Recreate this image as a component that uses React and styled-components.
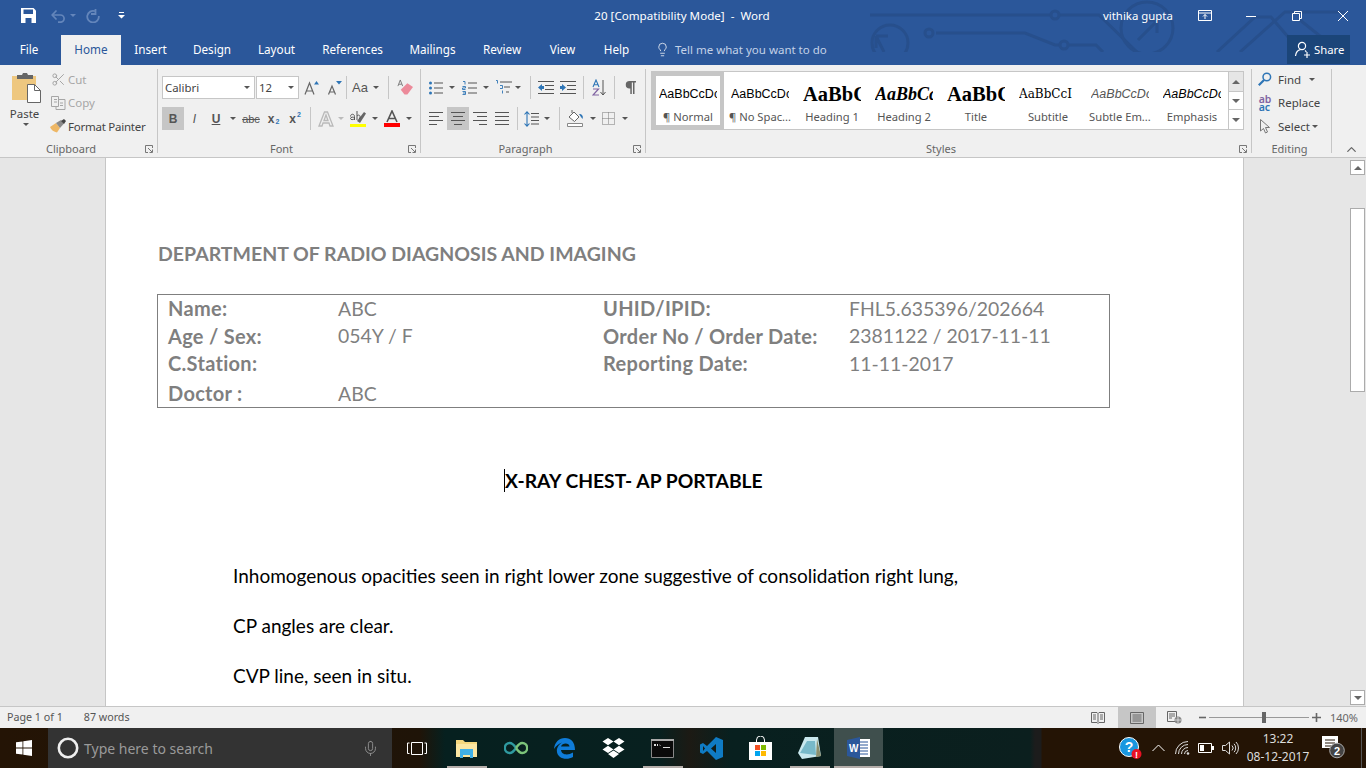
import React from 'react';
import styled, { createGlobalStyle } from 'styled-components';
import { Scissors, Lightbulb, ChevronUp, Mic } from 'lucide-react';

const UI = '"Noto Sans", "Open Sans", sans-serif';
const DOC = 'Lato, "Liberation Sans", sans-serif';
const BLUE = '#2b579a';
const LINE = '#c6c6c6';
const ACCENT = '#2e75b6';

const Global = createGlobalStyle`
  html, body { margin: 0; padding: 0; background: #fff; overflow: hidden; }
  * { box-sizing: border-box; }
`;

const Screen = styled.div`
  width: 1366px;
  height: 768px;
  display: flex;
  flex-direction: column;
  overflow: hidden;
  font-family: ${UI};
`;

/* title bar */
const Head = styled.header`
  position: relative;
  height: 65px;
  flex: none;
  background: ${BLUE};
  color: #fff;
`;
const Circuit = styled.svg`
  position: absolute;
  left: 860px;
  top: 0;
`;
const TitleRow = styled.div`
  position: relative;
  height: 35px;
  display: flex;
  align-items: center;
  padding-bottom: 4px;
`;
const Qat = styled.div`
  display: flex;
  align-items: center;
  width: 472px;
  padding-left: 21px;
`;
const QatBtn = styled.span`
  display: flex;
  align-items: center;
  justify-content: center;
  width: ${(p) => p.$w}px;
  margin-left: ${(p) => p.$ml || 0}px;
`;
const DocName = styled.div`
  width: 420px;
  text-align: center;
  font-size: 11.6px;
  white-space: pre;
`;
const UserName = styled.div`
  margin-left: 211px;
  width: 72px;
  font-size: 11.4px;
  white-space: nowrap;
`;
const WinBtn = styled.span`
  display: flex;
  justify-content: center;
  width: ${(p) => p.$w}px;
  margin-left: ${(p) => p.$ml || 0}px;
`;

const TabRow = styled.nav`
  position: relative;
  height: 30px;
  display: flex;
  align-items: flex-start;
`;
const Tab = styled.div`
  width: ${(p) => p.$w}px;
  height: 30px;
  padding-right: ${(p) => p.$pr || 0}px;
  line-height: 28px;
  text-align: center;
  font-size: 11.7px;
  color: ${(p) => (p.$on ? BLUE : '#fff')};
  background: ${(p) => (p.$on ? '#f0f0f0' : 'transparent')};
`;
const TellMe = styled.div`
  display: flex;
  align-items: center;
  gap: 5px;
  margin-left: 12px;
  height: 28px;
  font-size: 11.5px;
  color: #c3d2e8;
`;
const Share = styled.div`
  margin-left: auto;
  margin-right: 16px;
  width: 63px;
  height: 29px;
  display: flex;
  align-items: center;
  gap: 3px;
  padding-left: 7px;
  background: #1b4579;
  font-size: 11.3px;
`;

/* ribbon */
const Ribbon = styled.section`
  height: 93px;
  flex: none;
  display: flex;
  align-items: flex-start;
  padding-top: 4px;
  background: #f0f0f0;
  border-bottom: 1px solid ${LINE};
  color: #444;
  font-size: 11.5px;
`;
const Group = styled.div`
  width: ${(p) => p.$w}px;
  height: 84px;
  flex: none;
  display: flex;
  flex-direction: column;
  border-right: 1px solid ${LINE};
`;
const GroupBody = styled.div`
  flex: 1;
  min-height: 0;
  display: ${(p) => (p.$flex ? 'flex' : 'block')};
  padding: ${(p) => p.$pad || '0'};
`;
const GroupLabel = styled.div`
  display: flex;
  align-items: center;
  height: 16px;
  margin-bottom: -4px;
  padding-right: 4px;
  font-size: 11px;
  color: #666;
  line-height: 16px;
  & > span { flex: 1; text-align: center; }
  & > svg { margin-left: 3px; }
`;
const PasteCol = styled.div`
  width: 48px;
  flex: none;
  display: flex;
  flex-direction: column;
  align-items: center;
  padding: 4px 0 0 4px;
`;
const PasteName = styled.div`
  margin: 2px 3px 0 0;
  line-height: 18px;
`;
const SmallCol = styled.div`
  display: flex;
  flex-direction: column;
  gap: 3.5px;
`;
const SmallRow = styled.div`
  height: 20px;
  display: flex;
  align-items: center;
  white-space: nowrap;
  letter-spacing: ${(p) => (p.$tight ? '-0.25px' : 'normal')};
  color: ${(p) => (p.$off ? '#a6a6a6' : '#444')};
`;
const SmallIcon = styled.span`
  width: ${(p) => p.$w || 20}px;
  flex: none;
  display: flex;
  justify-content: center;
`;
const Row = styled.div`
  display: flex;
  align-items: center;
  height: 23px;
  margin-top: ${(p) => p.$mt || 0}px;
`;
const Tool = styled.span`
  width: ${(p) => p.$w}px;
  height: 23px;
  flex: none;
  margin-left: ${(p) => p.$ml || 0}px;
  display: flex;
  align-items: center;
  justify-content: center;
  background: ${(p) => (p.$on ? LINE : 'transparent')};
  color: #555;
`;
const Caret = styled.i`
  width: ${(p) => p.$w || 10}px;
  margin-left: ${(p) => p.$ml || 0}px;
  flex: none;
  display: flex;
  justify-content: center;
  &::after {
    content: '';
    border-left: 3px solid transparent;
    border-right: 3px solid transparent;
    border-top: 3px solid ${(p) => p.$c || '#555'};
  }
`;
const Sep = styled.span`
  width: 1px;
  height: 23px;
  flex: none;
  margin-left: ${(p) => p.$ml || 0}px;
  background: ${LINE};
`;
const Combo = styled.div`
  width: ${(p) => p.$w}px;
  height: 23px;
  flex: none;
  margin-right: ${(p) => p.$mr || 0}px;
  display: flex;
  align-items: center;
  justify-content: space-between;
  padding: 0 4px 0 2px;
  background: #fff;
  border: 1px solid ${LINE};
  font-size: 11.4px;
  color: #444;
`;

const Gallery = styled.div`
  width: 593px;
  height: 59px;
  margin: 2px 0 0 5px;
  display: flex;
  background: #fff;
  border: 1px solid ${LINE};
`;
const StyleItem = styled.div`
  width: 72px;
  height: 57px;
  flex: none;
  display: flex;
  flex-direction: column;
  align-items: center;
  border: 4px solid ${(p) => (p.$on ? LINE : 'transparent')};
  overflow: hidden;
`;
const Preview = styled.div`
  width: 58px;
  height: 33px;
  line-height: 36px;
  overflow: hidden;
  white-space: nowrap;
  text-align: left;
  color: ${(p) => p.$c || '#000'};
  font-family: ${(p) => p.$f || '"Liberation Sans", sans-serif'};
  font-size: ${(p) => p.$s || 12.5}px;
  font-weight: ${(p) => (p.$b ? 700 : 400)};
  font-style: ${(p) => (p.$i ? 'italic' : 'normal')};
`;
const StyleName = styled.div`
  line-height: 16px;
  margin-top: 1px;
  font-size: 11.2px;
  color: #555;
  white-space: nowrap;
`;
const GalleryScroll = styled.div`
  width: 15px;
  margin-left: auto;
  display: flex;
  flex-direction: column;
  border-left: 1px solid ${LINE};
`;
const GalleryBtn = styled.div`
  height: ${(p) => p.$h}px;
  display: flex;
  align-items: center;
  justify-content: center;
  background: ${(p) => (p.$off ? '#e6e6e6' : '#fff')};
  border-bottom: ${(p) => (p.$last ? 'none' : `1px solid ${LINE}`)};
`;
const Collapse = styled.div`
  flex: 1;
  height: 88px;
  display: flex;
  align-items: flex-end;
  padding-left: 12px;
  color: #666;
`;

/* document */
const DocArea = styled.main`
  flex: 1;
  min-height: 0;
  display: flex;
  background: #e6e6e6;
  border-bottom: 1px solid ${LINE};
`;
const Page = styled.article`
  width: 1139px;
  margin-left: 105px;
  padding: 84px 0 0 51px;
  background: #fff;
  border-left: 1px solid ${LINE};
  border-right: 1px solid ${LINE};
  overflow: hidden;
  font-family: ${DOC};
`;
const DeptTitle = styled.h1`
  margin: 0 0 0 1px;
  font-size: 19.5px;
  line-height: 24px;
  font-weight: 700;
  color: #7f7f7f;
`;
const InfoBox = styled.div`
  width: 953px;
  height: 114px;
  margin-top: 28px;
  padding-left: 10px;
  display: grid;
  grid-template-columns: 170px 265px 246px 1fr;
  grid-template-rows: 26px 29px 26px 31px;
  align-items: center;
  border: 1px solid #7f7f7f;
  color: #7f7f7f;
`;
const InfoCell = styled.div`
  font-weight: ${(p) => (p.$b ? 700 : 400)};
  font-size: ${(p) => (p.$b ? 20 : 19.4)}px;
  letter-spacing: ${(p) => (p.$b ? '0.3px' : 'normal')};
  white-space: nowrap;
  padding-top: ${(p) => (p.$low ? 3 : 0)}px;
`;
const ReportTitle = styled.h2`
  margin: 61px 0 0 347px;
  font-size: 19.3px;
  line-height: 24px;
  font-weight: 700;
  color: #000;
  white-space: nowrap;
`;
const TextCursor = styled.span`
  border-left: 1px solid #000;
`;
const Finding = styled.p`
  margin: ${(p) => p.$mt}px 0 0 76px;
  font-size: 19px;
  line-height: 24px;
  color: #000;
  white-space: nowrap;
`;
const ScrollBar = styled.div`
  width: 16px;
  margin-left: auto;
  padding: 2px 1px 1px 0;
  display: flex;
  flex-direction: column;
`;
const ScrollBtn = styled.div`
  height: 15px;
  flex: none;
  display: flex;
  align-items: center;
  justify-content: center;
  background: #fff;
  border: 1px solid #ababab;
`;
const ScrollThumb = styled.div`
  height: 184px;
  margin: 33px 0 auto;
  background: #fff;
  border: 1px solid #ababab;
`;
const Tri = styled.i`
  border-left: 4px solid transparent;
  border-right: 4px solid transparent;
  ${(p) => (p.$up ? 'border-bottom' : 'border-top')}: 4px solid #666;
`;

/* status bar */
const Status = styled.footer`
  height: 21px;
  flex: none;
  display: flex;
  align-items: center;
  padding: 0 0 2px 7px;
  background: #f0f0f0;
  color: #555;
  font-size: 10.7px;
`;
const Words = styled.span`
  margin-left: 21px;
`;
const StatusRight = styled.div`
  margin-left: auto;
  display: flex;
  align-items: center;
  height: 21px;
  margin-bottom: -2px;
  padding-right: 8px;
`;
const ViewBtn = styled.span`
  width: ${(p) => p.$w}px;
  height: 21px;
  margin-right: ${(p) => p.$mr || 0}px;
  display: flex;
  align-items: center;
  justify-content: center;
  background: ${(p) => (p.$on ? LINE : 'transparent')};
`;
const ZoomTrack = styled.div`
  position: relative;
  width: 100px;
  height: 1px;
  margin: 0 3px;
  background: #999;
`;
const ZoomThumb = styled.span`
  position: absolute;
  left: 53px;
  top: -5px;
  width: 4px;
  height: 11px;
  background: #666;
`;
const ZoomPct = styled.span`
  margin-left: 9px;
  font-size: 11px;
  color: #666;
`;

/* taskbar */
const Taskbar = styled.div`
  height: 40px;
  flex: none;
  display: flex;
  align-items: center;
  background: linear-gradient(90deg, #241405 0, #1f1408 420px, #06201f 445px, #08201f 660px, #1c1a14 690px, #08201f 730px, #0b1f1e 1030px, #1c1c1c 1035px, #1c1c1c 1041px, #241405 1042px);
`;
const StartBtn = styled.div`
  width: 48px;
  height: 40px;
  flex: none;
  display: flex;
  align-items: center;
  justify-content: center;
`;
const SearchBox = styled.div`
  width: 344px;
  height: 40px;
  flex: none;
  display: flex;
  align-items: center;
  padding-left: 9px;
  background: #333;
  color: #9a9a9a;
  font-size: 14px;
`;
const SearchHint = styled.span`
  margin-left: 5px;
`;
const MicSlot = styled.span`
  margin-left: auto;
  margin-right: 13px;
  display: flex;
  color: #9a9a9a;
`;
const Apps = styled.div`
  display: flex;
  margin-left: -1px;
`;
const AppBtn = styled.div`
  width: ${(p) => p.$w || 49}px;
  height: 40px;
  display: flex;
  align-items: center;
  justify-content: center;
  background-color: ${(p) => (p.$on ? '#3f4f4d' : 'transparent')};
  background-image: ${(p) => (p.$run ? 'linear-gradient(#b5aeaa, #b5aeaa)' : 'none')};
  background-repeat: no-repeat;
  background-position: center bottom;
  background-size: ${(p) => (p.$on ? '100%' : '40px')} 2px;
`;
const Tray = styled.div`
  margin-left: auto;
  display: flex;
  align-items: center;
  height: 40px;
`;
const TraySlot = styled.span`
  width: ${(p) => p.$w}px;
  display: flex;
  justify-content: center;
`;
const Clock = styled.div`
  width: 72px;
  text-align: center;
  color: #ddd;
  font-size: 12px;
  line-height: 18px;
`;
const Notify = styled.span`
  width: 40px;
  display: flex;
  justify-content: center;
`;
const DesktopEdge = styled.span`
  width: 1px;
  height: 40px;
  margin: 0 4px 0 7px;
  background: #555;
`;

/* drawings */
const Save = () => (
  <svg width="15" height="15" viewBox="0 0 15 15">
    <path d="M0 0h12.5L15 2.5V15H0z" fill="#fff" />
    <path d="M2.5 1.5H12V6H2.5z" fill={BLUE} />
    <path d="M4.5 10h6v5h-6z" fill={BLUE} />
  </svg>
);
const Undo = () => (
  <svg width="14" height="14" viewBox="0 0 14 14" fill="none" stroke="#6486bb" strokeWidth="1.7">
    <path d="M1.5 6h8a3.6 3.6 0 0 1 0 7.2H7" />
    <path d="M5.5 1.5 1.2 6l4.3 4.5" />
  </svg>
);
const Redo = () => (
  <svg width="14" height="14" viewBox="0 0 14 14" fill="none" stroke="#6486bb" strokeWidth="1.8">
    <path d="M9 2.2A5.8 5.8 0 1 0 12.8 7" />
    <path d="M9.5 0v5H5" />
  </svg>
);
const Customize = () => (
  <svg width="7" height="7" viewBox="0 0 7 7" fill="#fff">
    <path d="M1 0h5v1H1zM0 3h7L3.5 6.5z" />
  </svg>
);
const RibbonDisplay = () => (
  <svg width="14" height="11" viewBox="0 0 14 11" fill="none" stroke="#fff">
    <path d="M.5.5h13v10H.5zM.5 3h13" />
    <path d="M7 9V4.5M5 6.5l2-2 2 2" />
  </svg>
);
const Minimize = () => (
  <svg width="10" height="10" viewBox="0 0 10 10" stroke="#fff"><path d="M0 5.5h10" /></svg>
);
const Restore = () => (
  <svg width="10" height="10" viewBox="0 0 10 10" fill="none" stroke="#fff">
    <path d="M.5 2.5h7v7h-7zM2.5 2.5v-2h7v7h-2" />
  </svg>
);
const CloseX = () => (
  <svg width="10" height="10" viewBox="0 0 10 10" stroke="#fff"><path d="m0 0 10 10M10 0 0 10" /></svg>
);
const UserPlus = () => (
  <svg width="17" height="17" viewBox="0 0 17 17" fill="none" stroke="#fff" strokeWidth="1.2">
    <circle cx="8" cy="5" r="3.6" />
    <path d="M1.5 15c.5-3.8 2.5-6 5-6.3M11 9.5c.6.4 1 .9 1.3 1.5M10 14h6M13 11v6" />
  </svg>
);
const Launcher = () => (
  <svg width="8" height="8" viewBox="0 0 8 8" fill="none" stroke="#777">
    <path d="M7.5 3V.5H.5v7H3" />
    <path d="m3 3 4 4M7.5 4.5v3h-3" />
  </svg>
);
const PasteIcon = () => (
  <svg width="29" height="30" viewBox="0 0 29 30">
    <path d="M0 3h24v24H0z" fill="#eec77f" />
    <path d="M5 2h5l1-2h4l1 2h5v4H5z" fill="#666" />
    <path d="M15.5 11.5h7l6 6v12h-13z" fill="#fff" stroke="#666" />
    <path d="M22.5 11.5v6h6" fill="none" stroke="#666" />
  </svg>
);
const CopyIcon = () => (
  <svg width="15" height="14" viewBox="0 0 15 14" fill="none" stroke="#a6a6a6">
    <path d="M.5.5h7v10h-7zM7.5 3.5H14v10H5v-3M3 3.5h3M3 6h3M9 7h3M9 9.5h3" />
  </svg>
);
const PainterIcon = () => (
  <svg width="16" height="14" viewBox="0 0 16 14">
    <path d="M0 8 6 4l4 5-3 4.5C4 13 1 11 0 8z" fill="#eeb765" />
    <path d="m6 4 5-3 3 3.5L10 9z" fill="#8a8a8a" />
    <path d="m11 2 3-2 2 2-2 3z" fill="#444" />
  </svg>
);
const Grow = ({ up }) => (
  <svg width="15" height="14" viewBox="0 0 15 14" fill="none">
    <path d={up ? 'M1 13.5 5.5 2 10 13.5M2.5 10h6' : 'M1.5 13.5 5 5l3.5 8.5M2.8 11h4.5'} stroke="#666" strokeWidth="1.2" />
    <path d={up ? 'M10 3.5 12.5 0 15 3.5z' : 'M9 0h6l-3 3.5z'} fill={ACCENT} />
  </svg>
);
const Eraser = () => (
  <svg width="17" height="17" viewBox="0 0 17 17">
    <path d="M4 11 11 4l6 4-6 8H8z" fill="#ec8a9a" />
    <path d="M1 7 3.5.5 6 7M2 5h3" fill="none" stroke="#777" />
  </svg>
);
const BoldMark = styled.span`
  font-family: "Liberation Sans", sans-serif;
  font-weight: ${(p) => (p.$b ? 700 : 400)};
  font-style: ${(p) => (p.$i ? 'italic' : 'normal')};
  text-decoration: ${(p) => p.$d || 'none'};
  font-size: ${(p) => p.$s || 12}px;
  color: #555;
`;
const Script = styled.sub`
  font-size: 7px;
  color: ${ACCENT};
  vertical-align: ${(p) => (p.$up ? '6px' : '-1px')};
  margin-left: 1px;
`;
const TextEffect = () => (
  <svg width="16" height="16" viewBox="0 0 16 16" fill="#f0f0f0" stroke="#b9b9b9" strokeWidth="1.3">
    <path d="M1 15 6.5 1h3L15 15h-3l-1-3H5l-1 3zM6 9.5h4L8 4z" />
  </svg>
);
const Highlight = () => (
  <svg width="16" height="17" viewBox="0 0 16 17">
    <path d="M0 14h16v3H0z" fill="#ff0" />
    <path d="m7 11 7-9 2 1.5L10 13z" fill="#666" />
    <path d="M.5 6.5c0-3 4-3 4 0V10M4.5 8c-1-1.5-4-1-4 .5 0 1.5 3 1.5 4 0M7 1v9M7 6c2-2 4-.5 2.5 3" fill="none" stroke="#555" />
  </svg>
);
const FontColor = () => (
  <svg width="16" height="17" viewBox="0 0 16 17">
    <path d="M0 13h16v4H0z" fill="#f00" />
    <path d="M3 12 8 1l5 11M4.8 8.5h6.4" fill="none" stroke="#555" strokeWidth="1.6" />
  </svg>
);
const Bullets = () => (
  <svg width="14" height="14" viewBox="0 0 14 14">
    <path d="M5 2h9M5 7h9M5 12h9" stroke="#555" />
    <g fill={ACCENT}><circle cx="1.5" cy="2" r="1.5" /><circle cx="1.5" cy="7" r="1.5" /><circle cx="1.5" cy="12" r="1.5" /></g>
  </svg>
);
const Numbers = () => (
  <svg width="15" height="14" viewBox="0 0 15 14">
    <path d="M6 2h9M6 7h9M6 12h9" stroke="#555" />
    <path d="M1 .5h2v3M.5 5.5h3V7h-3v1.5h3M.5 10.5h3v3h-3M1 12h2.5" fill="none" stroke={ACCENT} strokeWidth=".9" />
  </svg>
);
const Multi = () => (
  <svg width="17" height="15" viewBox="0 0 17 15">
    <path d="M5 2h12M9 7h6M11 12h3" stroke="#555" />
    <path d="M1 .5h1.5v3M5 5.5h2.5v3H5M7.5 10.5v3" fill="none" stroke={ACCENT} strokeWidth=".9" />
  </svg>
);
const Indent = ({ out }) => (
  <svg width="16" height="13" viewBox="0 0 16 13">
    <path d="M0 .5h16M7 4.5h9M7 8.5h9M0 12.5h16" stroke="#555" />
    <path d={out ? 'M0 6.5 4 3v2h2v3H4v2z' : 'M6 6.5 2 3v2H0v3h2v2z'} fill={ACCENT} />
  </svg>
);
const SortIcon = () => (
  <svg width="15" height="17" viewBox="0 0 15 17" fill="none">
    <path d="M1 8 4 1l3 7M2 5.7h4" stroke={ACCENT} strokeWidth="1.1" />
    <path d="M1 10h5.5L1 16h6" stroke="#8064a2" strokeWidth="1.2" />
    <path d="M11 1v15M8.5 13l2.5 3 2.5-3" stroke="#555" />
  </svg>
);
const Pilcrow = () => (
  <svg width="11" height="13" viewBox="0 0 11 13" fill="#666">
    <path d="M4.5 0H11v1.5H9.5V13H8V1.5H6.8V13H5.3V7.5h-.8a3.75 3.75 0 0 1 0-7.5z" />
  </svg>
);
const Align = ({ kind }) => {
  const rows = {
    left: 'M0 .5h14M0 4.5h10M0 8.5h14M0 12.5h8',
    center: 'M0 .5h14M2 4.5h10M0 8.5h14M3 12.5h8',
    right: 'M0 .5h14M4 4.5h10M0 8.5h14M6 12.5h8',
    full: 'M0 .5h14M0 4.5h14M0 8.5h14M0 12.5h14',
  };
  return <svg width="14" height="13" viewBox="0 0 14 13"><path d={rows[kind]} stroke="#555" /></svg>;
};
const Spacing = () => (
  <svg width="15" height="16" viewBox="0 0 15 16">
    <path d="M7 2.5h8M7 6h8M7 9.5h8M7 13h8" stroke="#555" />
    <path d="M3 1v14M.5 3.5 3 .8l2.5 2.7M.5 12.5 3 15.2l2.5-2.7" fill="none" stroke={ACCENT} strokeWidth="1.1" />
  </svg>
);
const Shading = () => (
  <svg width="17" height="17" viewBox="0 0 17 17">
    <path d="M.5 13.5h15v3H.5z" fill="#fff" stroke="#888" />
    <path d="M2 7 7 2l5 5-4.5 4.5z" fill="#fff" stroke="#666" />
    <path d="M12 4c3 0 4.5 2 3.5 5L14 7z" fill={ACCENT} />
    <path d="M5 0v3" stroke="#666" />
  </svg>
);
const Borders = () => (
  <svg width="13" height="13" viewBox="0 0 13 13" fill="none" stroke="#777" strokeDasharray="1 1">
    <path d="M.5.5h12v12H.5zM6.5.5v12M.5 6.5h12" />
  </svg>
);
const FindIcon = () => (
  <svg width="14" height="14" viewBox="0 0 14 14" fill="none" stroke={ACCENT}>
    <circle cx="8.8" cy="5" r="3.8" strokeWidth="1.5" />
    <path d="M6 8 .8 13.2" strokeWidth="2.2" />
  </svg>
);
const ReplaceGlyph = styled.span`
  display: flex;
  flex-direction: column;
  font-size: 10.5px;
  font-weight: 600;
`;
const ReplaceTop = styled.span`
  display: block;
  height: 8px;
  line-height: 8px;
  color: #8064a2;
`;
const ReplaceBottom = styled.span`
  display: block;
  height: 8px;
  line-height: 8px;
  color: ${ACCENT};
`;
const PointerIcon = () => (
  <svg width="10" height="15" viewBox="0 0 10 15" fill="#f0f0f0" stroke="#777">
    <path d="M.5.5V12l3-2.5 2 4.5 2-1-2-4.5h4z" />
  </svg>
);
const ReadIcon = () => (
  <svg width="14" height="12" viewBox="0 0 14 12" fill="none" stroke="#666">
    <path d="M.5.5H6l1 1 1-1h5.5v10H8l-1 1-1-1H.5zM7 1.5v9M2 3h3M2 5h3M2 7h3M9 3h3M9 5h3M9 7h3" />
  </svg>
);
const PrintIcon = () => (
  <svg width="14" height="12" viewBox="0 0 14 12" fill="none" stroke="#666">
    <path d="M.5.5h13v11H.5zM2.5 3h9M2.5 5h9M2.5 7h9M2.5 9h9" />
  </svg>
);
const WebIcon = () => (
  <svg width="15" height="13" viewBox="0 0 15 13">
    <path d="M.5.5h9v10h-9zM2 3h6M2 5h6M2 7h3" fill="none" stroke="#666" />
    <circle cx="11" cy="9" r="3.5" fill="#888" />
    <path d="M8 9h6M11 6v6" stroke="#f0f0f0" strokeWidth=".7" />
  </svg>
);
const Plus = () => <svg width="9" height="9" viewBox="0 0 9 9"><path d="M0 4.5h9M4.5 0v9" stroke="#666" strokeWidth="1.6" /></svg>;
const Minus = () => <svg width="7" height="9" viewBox="0 0 7 9"><path d="M0 4.5h7" stroke="#666" strokeWidth="1.6" /></svg>;

const StartLogo = () => (
  <svg width="16" height="16" viewBox="0 0 16 16" fill="#fff">
    <path d="M0 2.3 6.5 1.4v6.2H0zM7.3 1.3 16 0v7.6H7.3zM0 8.4h6.5v6.2L0 13.7zM7.3 8.4H16V16l-8.7-1.3z" />
  </svg>
);
const Cortana = () => (
  <svg width="22" height="22" viewBox="0 0 22 22" fill="none"><circle cx="11" cy="11" r="9.2" stroke="#eee" strokeWidth="2.6" /></svg>
);
const TaskView = () => (
  <svg width="20" height="13" viewBox="0 0 20 13" fill="none" stroke="#fff">
    <path d="M4.5.5h11v12h-11zM2.500 1H.5v10.500h2M17.500 1h2v10.500h-2" />
  </svg>
);
const Explorer = () => (
  <svg width="22" height="19" viewBox="0 0 22 19">
    <path d="M0 1h7l2 2h12v15H0z" fill="#f5d77e" />
    <path d="M0 5h21v13H0z" fill="#fbe6a2" />
    <path d="M4 10h13v9h-3v-3H7v3H4z" fill="#3fb0e8" />
  </svg>
);
const Arduino = () => (
  <svg width="24" height="14" viewBox="0 0 24 14" fill="none" strokeWidth="2.4">
    <path d="M12 7C9 2.5 7.500 2 5.800 2a5 5 0 0 0 0 10c1.700 0 3.200-.5 6.200-5" stroke="#2f9aa0" />
    <path d="M12 7c3-4.500 4.500-5 6.200-5a5 5 0 0 1 0 10c-1.700 0-3.200-.5-6.200-5" stroke="#7cc47a" />
  </svg>
);
const Edge = () => (
  <svg width="21" height="21" viewBox="0 0 21 21">
    <path d="M0 11C.5 4.500 5 0 11 0c6 0 10 4 10 12H7c.3 4.500 6.500 6 12 2.500v4.500C12 23 1.500 20 3 11c.8-3 2.500-5 5-6.500C5 5.500 2 8 0 11zm7-2.500h8.500C15.500 4.500 8 4.500 7 8.500z" fill="#0f7cd8" />
  </svg>
);
const Dropbox = () => (
  <svg width="23" height="21" viewBox="0 0 23 21" fill="#fff">
    <path d="m6 0 5.500 3.600L6 7.200.5 3.600zM17 0l5.500 3.600L17 7.200l-5.500-3.600zM6 7.800l5.500 3.600L6 15 .5 11.400zM17 7.800l5.500 3.600L17 15l-5.500-3.600zM6 16l5.500-3.500L17 16l-5.500 4z" />
  </svg>
);
const Cmd = () => (
  <svg width="23" height="19" viewBox="0 0 23 19">
    <path d="M.5.5h22v18H.5z" fill="#0a0a0a" stroke="#888" />
    <path d="M0 0h23v2H0z" fill="#aaa" />
    <path d="M3 5h2v2H3zM6 5h1v2H6zM8 5l2 2H9zM12 8h7v1h-7z" fill="#ddd" />
  </svg>
);
const VsCode = () => (
  <svg width="23" height="23" viewBox="0 0 23 23">
    <path d="M16 0l7 3v17l-7 3-9-9-4 3-3-1.500v-8L3 6l4 3zM16 7l-5 4.500 5 4.500zM3 9v5l2-2.500z" fill="#0f7bc4" />
  </svg>
);
const Store = () => (
  <svg width="23" height="24" viewBox="0 0 23 24">
    <path d="M7.500 6V4a4 4 0 0 1 8 0v2" fill="none" stroke="#fff" />
    <path d="M0 6h23v18H0z" fill="#fff" />
    <path d="M6 9h5v5H6z" fill="#f25022" /><path d="M12 9h5v5h-5z" fill="#7fba00" />
    <path d="M6 15h5v5H6z" fill="#00a4ef" /><path d="M12 15h5v5h-5z" fill="#ffb900" />
  </svg>
);
const Notepad = () => (
  <svg width="23" height="22" viewBox="0 0 23 22">
    <path d="M7 0h13l3 19-19 3-4-6z" fill="#c9e8ee" />
    <path d="M19 2l4 17-5 1z" fill="#8b8f6e" />
    <path d="M2 16 9 4h8l1 14z" fill="#78b9c9" />
  </svg>
);
const WordIcon = () => (
  <svg width="23" height="22" viewBox="0 0 23 22">
    <path d="M8 2h15v18H8z" fill="#fff" />
    <path d="M13 5h8M13 8h8M13 11h8M13 14h8M13 17h8" stroke="#2b579a" />
    <path d="M0 3 13 0v22L0 19z" fill="#2b579a" />
    <text x="2" y="15" fontFamily="Liberation Sans" fontSize="10" fontWeight="700" fill="#fff">W</text>
  </svg>
);
const HelpBadge = () => (
  <svg width="23" height="23" viewBox="0 0 23 23">
    <circle cx="10" cy="10" r="9.5" fill="#1a97e0" stroke="#fff" />
    <text x="10" y="15" textAnchor="middle" fontFamily="Liberation Sans" fontSize="14" fontWeight="700" fill="#fff">?</text>
    <circle cx="17.5" cy="17" r="5" fill="#e81123" />
    <text x="17.5" y="21" textAnchor="middle" fontFamily="Liberation Sans" fontSize="9" fontWeight="700" fill="#fff">!</text>
  </svg>
);
const Chevron = () => (
  <svg width="13" height="8" viewBox="0 0 13 8" fill="none" stroke="#fff"><path d="m.5 7 6-6 6 6" /></svg>
);
const Wifi = () => (
  <svg width="15" height="14" viewBox="0 0 15 14" fill="none" stroke="#ddd">
    <path d="M.5 13A12.500 12.500 0 0 1 13 .5M3.500 13A9.500 9.500 0 0 1 13 3.500M6.500 13A6.500 6.500 0 0 1 13 6.500M9.500 13A3.500 3.500 0 0 1 13 9.500" />
    <circle cx="13" cy="12.5" r="1.3" fill="#ddd" stroke="none" />
  </svg>
);
const Battery = () => (
  <svg width="16" height="10" viewBox="0 0 16 10">
    <path d="M.5.5h13v9H.5z" fill="none" stroke="#fff" />
    <path d="M2 2h4v6H2z" fill="#fff" /><path d="M14 3h2v4h-2z" fill="#fff" />
  </svg>
);
const Volume = () => (
  <svg width="17" height="14" viewBox="0 0 17 14" fill="none" stroke="#ddd">
    <path d="M.5 4.500h3l4-3.500v12l-4-3.500h-3zM10 4.500a3.500 3.500 0 0 1 0 5M12 2.800a6 6 0 0 1 0 8.400M14 1a8.500 8.500 0 0 1 0 12" />
  </svg>
);
const Bubble = () => (
  <svg width="25" height="24" viewBox="0 0 25 24">
    <path d="M0 0h16v12h-4l-3 3v-3H0z" fill="#fff" />
    <path d="M3 4h10M3 7h10M3 10h6" stroke="#241405" />
    <circle cx="15" cy="14.5" r="7.3" fill="#444" stroke="#aaa" />
    <text x="15" y="18.5" textAnchor="middle" fontFamily="Liberation Sans" fontSize="11" fontWeight="700" fill="#fff">2</text>
  </svg>
);

const TABS = [
  ['File', 61, false, 3], ['Home', 60, true], ['Insert', 59], ['Design', 64], ['Layout', 65],
  ['References', 87], ['Mailings', 73], ['Review', 66], ['View', 55], ['Help', 53],
];

const SERIF = '"Liberation Serif", serif';
const STYLES = [
  { name: '¶ Normal', on: true },
  { name: '¶ No Spac...' },
  { name: 'Heading 1', text: 'AaBbCc', s: 20.5, b: true, f: SERIF },
  { name: 'Heading 2', text: 'AaBbCc', s: 18, b: true, i: true, f: SERIF },
  { name: 'Title', text: 'AaBbCc', s: 20.5, b: true, f: SERIF },
  { name: 'Subtitle', text: 'AaBbCcI', f: '"DejaVu Serif", serif', s: 12 },
  { name: 'Subtle Em...', i: true, c: '#555' },
  { name: 'Emphasis', i: true },
];

const INFO = [
  ['Name:', 'ABC', 'UHID/IPID:', 'FHL5.635396/202664'],
  ['Age / Sex:', '054Y / F', 'Order No / Order Date:', '2381122 / 2017-11-11'],
  ['C.Station:', '', 'Reporting Date:', '11-11-2017'],
  ['Doctor :', 'ABC', '', ''],
];

const APPS = [
  [TaskView, false, false, 51], [Explorer, true], [Arduino], [Edge], [Dropbox], [Cmd, true], [VsCode], [Store], [Notepad, true], [WordIcon, true, true],
];

export default function App() {
  return (
    <Screen>
      <Global />
      <Head>
        <Circuit width="506" height="52" viewBox="0 0 506 52" fill="none" stroke="#274f8c" strokeWidth="3">
          <path d="M10 15h181M199 15h40l38 37" />
          <circle cx="195" cy="15" r="4" />
          <circle cx="30" cy="43" r="18" />
          <path d="M24 52l-8-16M16 36h12M16 36v12" />
          <path d="M76 33h89l30 12h5M208 45h28l7 7" />
          <circle cx="69" cy="33" r="4" />
          <circle cx="204" cy="45" r="4" />
          <circle cx="287" cy="28" r="26" />
          <path d="M278 40l18-18M284 20h13v13" />
          <path d="M357 52l38-35h16l30 35M380 52l45-40h60M440 20l40 32" />
        </Circuit>
        <TitleRow>
          <Qat>
            <QatBtn $w={15}><Save /></QatBtn>
            <QatBtn $w={14} $ml={15}><Undo /></QatBtn>
            <Caret $w={6} $ml={5} $c="#6486bb" />
            <QatBtn $w={14} $ml={10}><Redo /></QatBtn>
            <QatBtn $w={7} $ml={18}><Customize /></QatBtn>
          </Qat>
          <DocName>20 [Compatibility Mode]  -  Word</DocName>
          <UserName>vithika gupta</UserName>
          <WinBtn $w={14} $ml={23}><RibbonDisplay /></WinBtn>
          <WinBtn $w={10} $ml={34}><Minimize /></WinBtn>
          <WinBtn $w={10} $ml={36}><Restore /></WinBtn>
          <WinBtn $w={10} $ml={36}><CloseX /></WinBtn>
        </TitleRow>
        <TabRow>
          {TABS.map(([name, w, on, pr]) => (
            <Tab key={name} $w={w} $on={on} $pr={pr}>{name}</Tab>
          ))}
          <TellMe>
            <Lightbulb size={15} strokeWidth={1.2} color="#fff" />
            <span>Tell me what you want to do</span>
          </TellMe>
          <Share><UserPlus />Share</Share>
        </TabRow>
      </Head>

      <Ribbon>
        <Group $w={158}>
          <GroupBody $flex>
            <PasteCol>
              <PasteIcon />
              <PasteName>Paste</PasteName>
              <Caret $c="#555" />
            </PasteCol>
            <SmallCol>
              <SmallRow $off><SmallIcon><Scissors size={15} strokeWidth={1.6} /></SmallIcon>Cut</SmallRow>
              <SmallRow $off><SmallIcon><CopyIcon /></SmallIcon>Copy</SmallRow>
              <SmallRow $tight><SmallIcon><PainterIcon /></SmallIcon>Format Painter</SmallRow>
            </SmallCol>
          </GroupBody>
          <GroupLabel><span>Clipboard</span><Launcher /></GroupLabel>
        </Group>

        <Group $w={263}>
          <GroupBody $pad="7px 0 0 4px">
            <Row>
              <Combo $w={93} $mr={1}>Calibri<Caret $w={6} /></Combo>
              <Combo $w={43}>12<Caret $w={6} /></Combo>
              <Tool $w={24}><Grow up /></Tool>
              <Tool $w={23}><Grow /></Tool>
              <Sep />
              <Tool $w={26}><BoldMark $s={13}>Aa</BoldMark></Tool>
              <Caret $w={6} />
              <Sep $ml={9} />
              <Tool $w={16} $ml={8}><Eraser /></Tool>
            </Row>
            <Row $mt={8}>
              <Tool $w={22} $on><BoldMark $b>B</BoldMark></Tool>
              <Tool $w={21}><BoldMark $i>I</BoldMark></Tool>
              <Tool $w={22}><BoldMark $b $d="underline">U</BoldMark></Tool>
              <Caret $w={12} />
              <Tool $w={24}><BoldMark $s={11} $d="line-through">abc</BoldMark></Tool>
              <Tool $w={21}><BoldMark $b>x<Script>2</Script></BoldMark></Tool>
              <Tool $w={22}><BoldMark $b>x<Script $up>2</Script></BoldMark></Tool>
              <Sep $ml={4} />
              <Tool $w={24} $ml={3}><TextEffect /></Tool>
              <Caret $w={6} $c="#bbb" />
              <Tool $w={28}><Highlight /></Tool>
              <Caret $w={6} />
              <Tool $w={28}><FontColor /></Tool>
              <Caret $w={6} />
            </Row>
          </GroupBody>
          <GroupLabel><span>Font</span><Launcher /></GroupLabel>
        </Group>

        <Group $w={225}>
          <GroupBody $pad="7px 0 0 4px">
            <Row>
              <Tool $w={22}><Bullets /></Tool>
              <Caret />
              <Tool $w={24}><Numbers /></Tool>
              <Caret />
              <Tool $w={24}><Multi /></Tool>
              <Caret $w={6} />
              <Sep $ml={9} />
              <Tool $w={26} $ml={2}><Indent out /></Tool>
              <Tool $w={18}><Indent /></Tool>
              <Sep $ml={6} />
              <Tool $w={30}><SortIcon /></Tool>
              <Sep />
              <Tool $w={30}><Pilcrow /></Tool>
            </Row>
            <Row $mt={8}>
              <Tool $w={22}><Align kind="left" /></Tool>
              <Tool $w={22} $on><Align kind="center" /></Tool>
              <Tool $w={22}><Align kind="right" /></Tool>
              <Tool $w={22}><Align kind="full" /></Tool>
              <Sep $ml={4} />
              <Tool $w={26}><Spacing /></Tool>
              <Caret $w={6} />
              <Sep $ml={9} />
              <Tool $w={30}><Shading /></Tool>
              <Caret $w={6} />
              <Tool $w={24}><Borders /></Tool>
              <Caret />
            </Row>
          </GroupBody>
          <GroupLabel><span>Paragraph</span><Launcher /></GroupLabel>
        </Group>

        <Group $w={606}>
          <GroupBody>
            <Gallery>
              {STYLES.map((s) => (
                <StyleItem key={s.name} $on={s.on}>
                  <Preview $s={s.s} $b={s.b} $i={s.i} $f={s.f} $c={s.c}>{s.text || 'AaBbCcDc'}</Preview>
                  <StyleName>{s.name}</StyleName>
                </StyleItem>
              ))}
              <GalleryScroll>
                <GalleryBtn $h={20} $off><Tri $up /></GalleryBtn>
                <GalleryBtn $h={18}><Tri /></GalleryBtn>
                <GalleryBtn $h={19} $last><Tri /></GalleryBtn>
              </GalleryScroll>
            </Gallery>
          </GroupBody>
          <GroupLabel><span>Styles</span><Launcher /></GroupLabel>
        </Group>

        <Group $w={80}>
          <GroupBody>
            <SmallCol>
              <SmallRow>
                <SmallIcon $w={26}><FindIcon /></SmallIcon>Find<Caret $w={6} $ml={8} />
              </SmallRow>
              <SmallRow>
                <SmallIcon $w={26}>
                  <ReplaceGlyph><ReplaceTop>ab</ReplaceTop><ReplaceBottom>ac</ReplaceBottom></ReplaceGlyph>
                </SmallIcon>
                Replace
              </SmallRow>
              <SmallRow>
                <SmallIcon $w={26}><PointerIcon /></SmallIcon>Select<Caret $w={6} $ml={2} />
              </SmallRow>
            </SmallCol>
          </GroupBody>
          <GroupLabel><span>Editing</span></GroupLabel>
        </Group>

        <Collapse><ChevronUp size={15} strokeWidth={2} /></Collapse>
      </Ribbon>

      <DocArea>
        <Page>
          <DeptTitle>DEPARTMENT OF RADIO DIAGNOSIS AND IMAGING</DeptTitle>
          <InfoBox>
            {INFO.flatMap((row, r) =>
              row.map((text, c) => (
                <InfoCell key={`${r}-${c}`} $b={c % 2 === 0} $low={r === 3}>{text}</InfoCell>
              ))
            )}
          </InfoBox>
          <ReportTitle><TextCursor />X-RAY CHEST- AP PORTABLE</ReportTitle>
          <Finding $mt={71}>Inhomogenous opacities seen in right lower zone suggestive of consolidation right lung,</Finding>
          <Finding $mt={26}>CP angles are clear.</Finding>
          <Finding $mt={26}>CVP line, seen in situ.</Finding>
        </Page>
        <ScrollBar>
          <ScrollBtn><Tri $up /></ScrollBtn>
          <ScrollThumb />
          <ScrollBtn><Tri /></ScrollBtn>
        </ScrollBar>
      </DocArea>

      <Status>
        <span>Page 1 of 1</span>
        <Words>87 words</Words>
        <StatusRight>
          <ViewBtn $w={40}><ReadIcon /></ViewBtn>
          <ViewBtn $w={38} $on><PrintIcon /></ViewBtn>
          <ViewBtn $w={38} $mr={5}><WebIcon /></ViewBtn>
          <Minus />
          <ZoomTrack><ZoomThumb /></ZoomTrack>
          <Plus />
          <ZoomPct>140%</ZoomPct>
        </StatusRight>
      </Status>

      <Taskbar>
        <StartBtn><StartLogo /></StartBtn>
        <SearchBox>
          <Cortana />
          <SearchHint>Type here to search</SearchHint>
          <MicSlot><Mic size={17} strokeWidth={1.2} /></MicSlot>
        </SearchBox>
        <Apps>
          {APPS.map(([Icon, run, on, w], i) => (
            <AppBtn key={i} $run={run} $on={on} $w={w}><Icon /></AppBtn>
          ))}
        </Apps>
        <Tray>
          <TraySlot $w={32}><HelpBadge /></TraySlot>
          <TraySlot $w={24}><Chevron /></TraySlot>
          <TraySlot $w={24}><Wifi /></TraySlot>
          <TraySlot $w={24}><Battery /></TraySlot>
          <TraySlot $w={24}><Volume /></TraySlot>
          <Clock>13:22<br />08-12-2017</Clock>
          <Notify><Bubble /></Notify>
          <DesktopEdge />
        </Tray>
      </Taskbar>
    </Screen>
  );
}
